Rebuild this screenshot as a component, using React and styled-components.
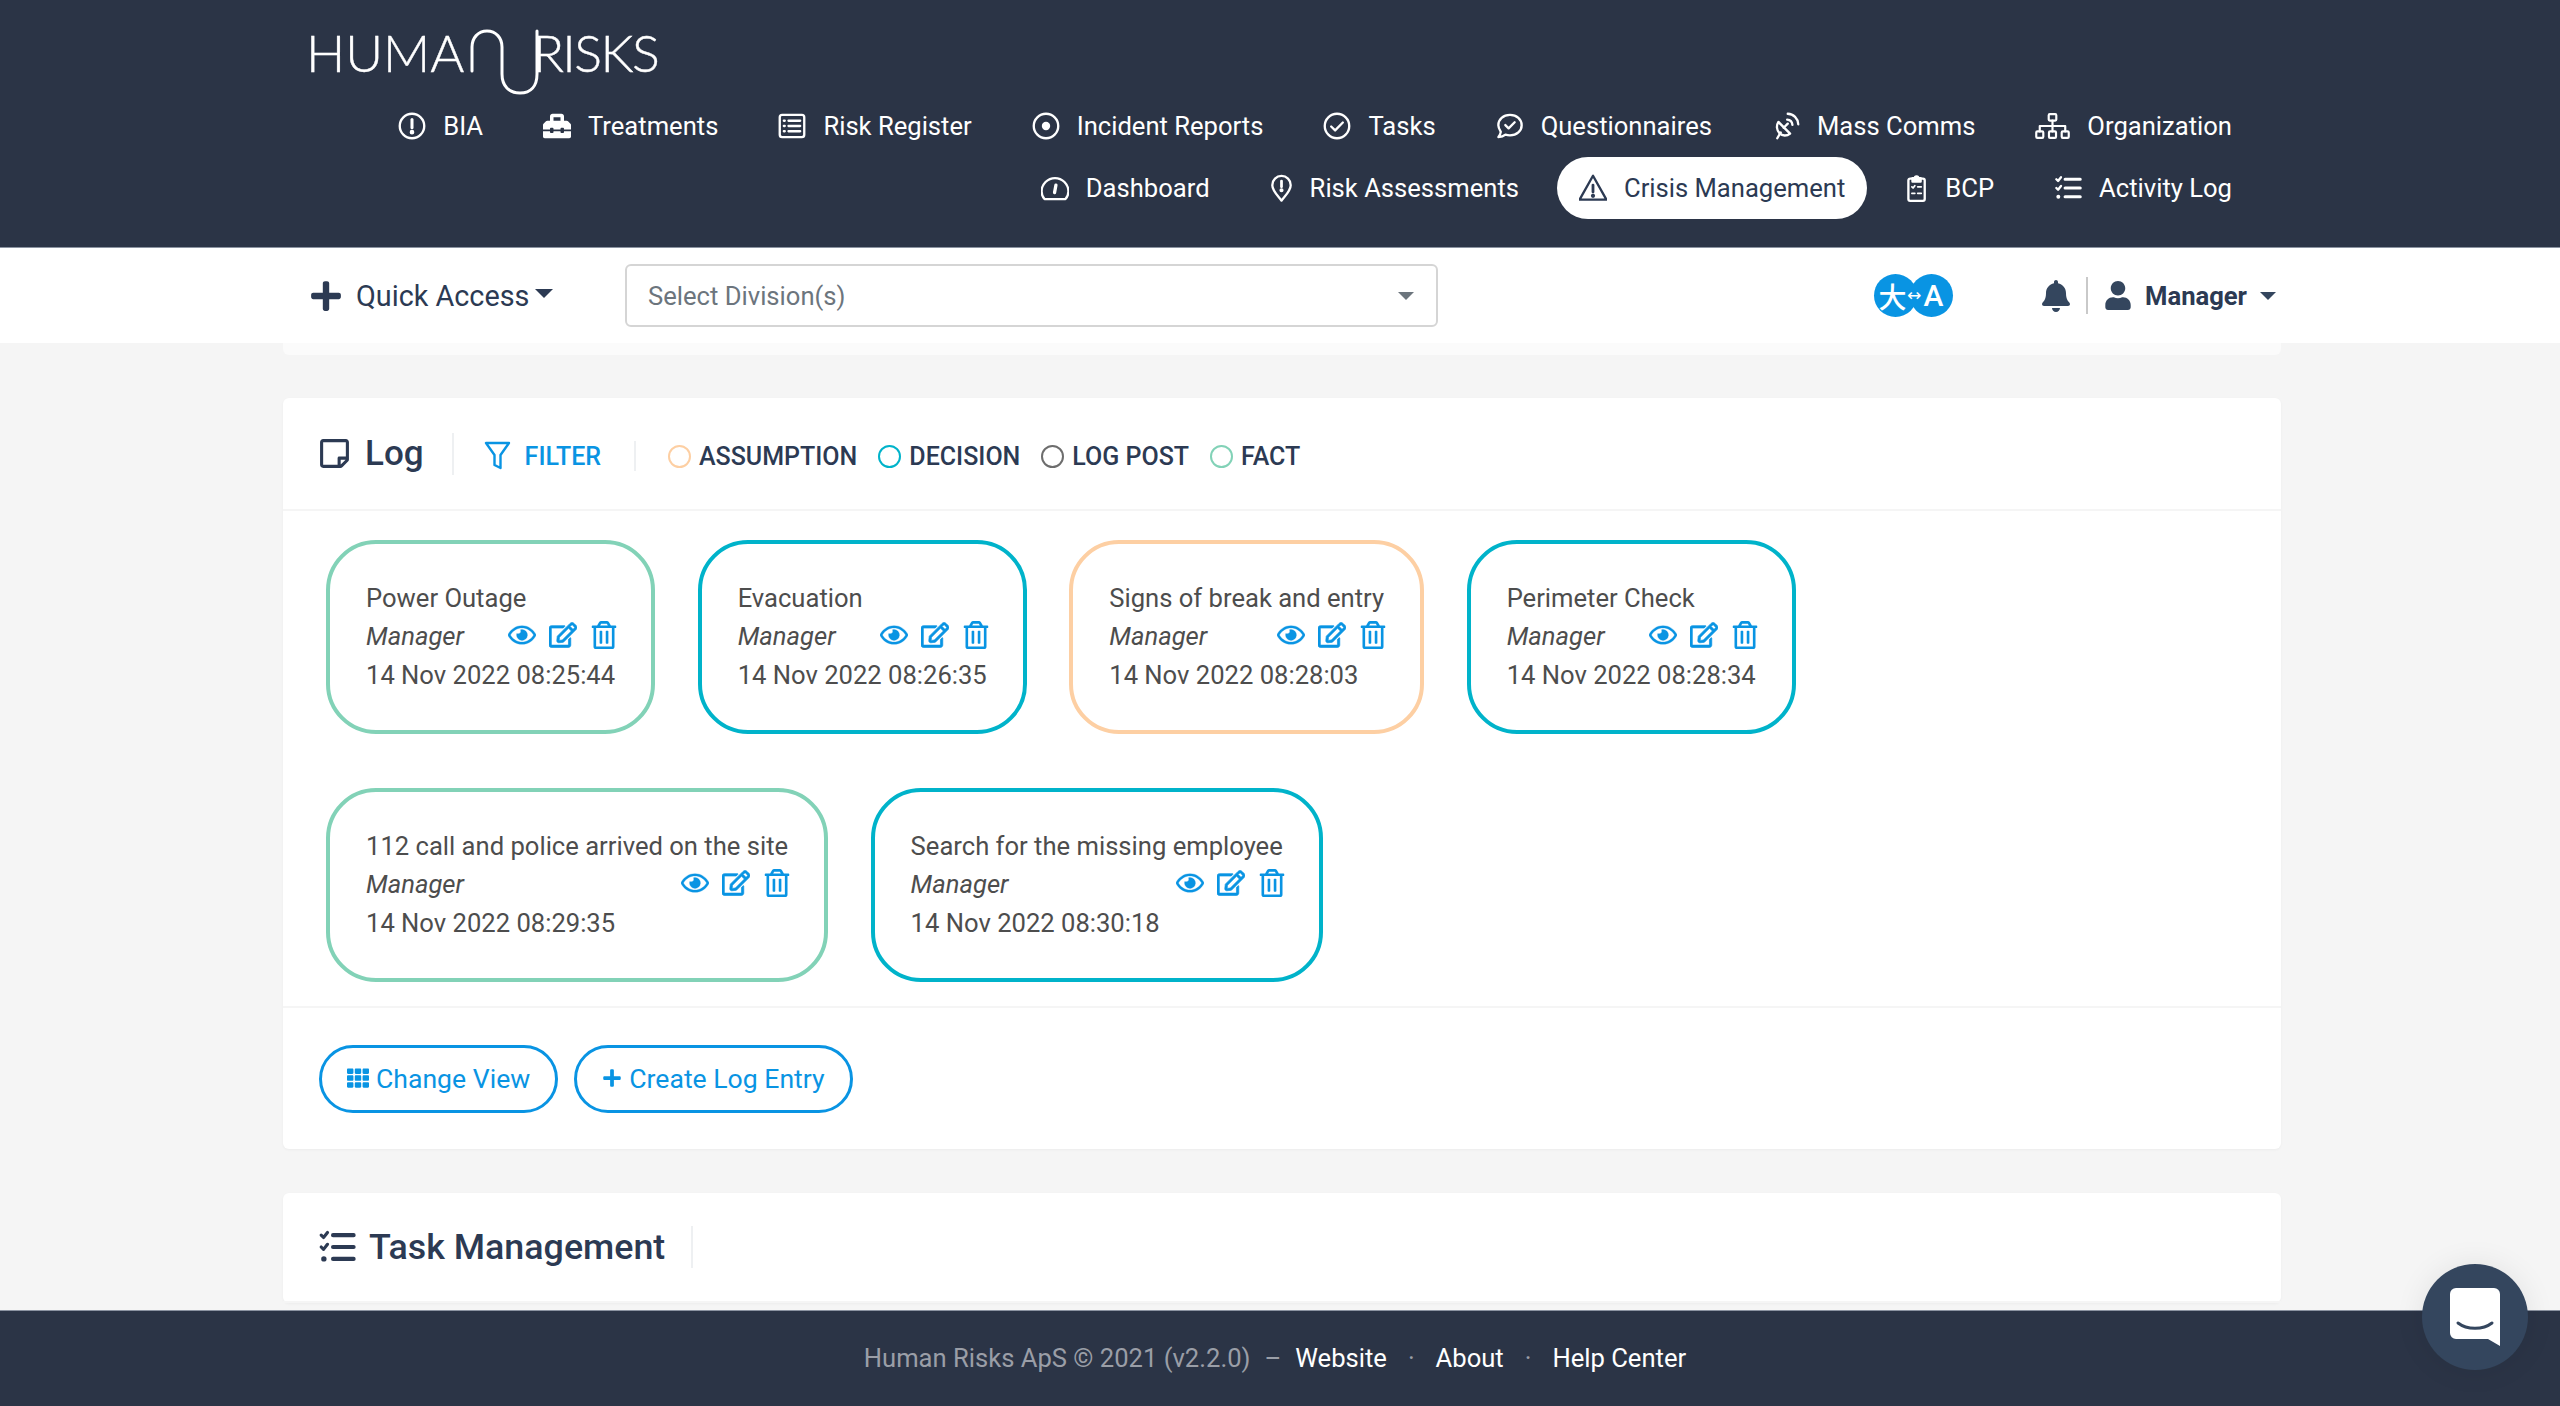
import React from 'react';
import styled, { createGlobalStyle } from 'styled-components';
import { FaToolbox, FaRegEye, FaRegEdit, FaRegTrashAlt, FaRegStickyNote, FaBell, FaUser, FaTh, FaPlus } from 'react-icons/fa';

const GlobalStyle = createGlobalStyle`
  html, body { margin: 0; padding: 0; height: 100%; background: #f5f5f5; }
  body { font-family: Roboto, "Liberation Sans", sans-serif; overflow: hidden; }
  * { box-sizing: border-box; }
`;

const navy = '#2b3446';
const ink = '#2c3a53';
const blue = '#0994e3';
const kinds = { fact: '#82d2b7', decision: '#00b3ca', assumption: '#fdcfa3', post: '#6d6d6d' };

const Page = styled.div`
  height: 100vh;
  display: flex;
  flex-direction: column;
`;

const Header = styled.header`
  background: ${navy};
  height: 248px;
  flex: none;
  padding: 0 306px;
  border-bottom: 1px solid #8b93a1;
`;

const Logo = styled.div`
  height: 95px;
  padding-top: 22px;
  display: flex;
  align-items: flex-start;
  color: #fff;
  font-family: Lato, sans-serif;
  font-weight: 300;
  font-size: 52px;
  line-height: 60px;
  -webkit-text-stroke: 0.4px #fff;
`;

const LogoWord = styled.span`
  display: block;
  letter-spacing: ${p => p.$tight}px;
`;

const LogoWave = styled.svg`
  flex: none;
  width: 76px;
  height: 72px;
  margin: 7px -13px 0 5px;
`;

const NavRow = styled.nav`
  height: 62px;
  display: flex;
  justify-content: flex-end;
  gap: 16px;
`;

const NavItem = styled.a`
  display: flex;
  align-items: center;
  gap: 17px;
  height: 62px;
  padding: 0 22px;
  border-radius: 31px;
  font-size: 25.6px;
  color: ${p => (p.$active ? ink : '#fff')};
  background: ${p => (p.$active ? '#fff' : 'transparent')};
`;

const NavGlyph = styled.svg`
  flex: none;
  width: ${p => p.$w || 28}px;
  height: ${p => p.$h || 28}px;
  fill: none;
  stroke: currentColor;
  stroke-width: 2;
  stroke-linecap: round;
  stroke-linejoin: round;
`;

const Toolbox = styled(FaToolbox)`
  flex: none;
  width: 28px;
  height: 28px;
`;

const Toolbar = styled.div`
  height: 95px;
  flex: none;
  background: #fff;
  position: relative;
  z-index: 2;
  display: flex;
  align-items: center;
  padding: 0 284px 0 309px;
  color: ${ink};
`;

const QuickAccess = styled.div`
  display: flex;
  align-items: center;
  width: 319px;
  font-size: 28.8px;
  gap: 13px;
`;

const PlusMark = styled(FaPlus)`
  width: 34px;
  height: 34px;
`;

const Caret = styled.span`
  display: inline-block;
  width: 0;
  height: 0;
  border-left: ${p => p.$size || 9}px solid transparent;
  border-right: ${p => p.$size || 9}px solid transparent;
  border-top: ${p => p.$size || 9}px solid ${p => p.$color || ink};
`;

const QuickCaret = styled(Caret)`
  margin-left: -7px;
  margin-top: -4px;
`;

const DivisionSelect = styled.div`
  width: 813px;
  height: 63px;
  flex: none;
  border: 2px solid #d5d5d5;
  border-radius: 6px;
  display: flex;
  align-items: center;
  justify-content: space-between;
  padding: 0 22px 0 21px;
  font-size: 25.6px;
  color: #6c757d;
`;

const TranslateBadge = styled.div`
  position: relative;
  margin-left: 436px;
  display: flex;
  flex: none;
`;

const TranslateCircle = styled.span`
  width: 43px;
  height: 43px;
  border-radius: 50%;
  background: ${blue};
  color: #fff;
  display: flex;
  align-items: center;
  justify-content: center;
  font-size: ${p => (p.$second ? 30 : 28)}px;
  font-weight: 500;
  margin-left: ${p => (p.$second ? '-7px' : '0')};
  font-family: ${p => (p.$second ? 'Roboto' : '"Noto Sans CJK JP"')}, sans-serif;
  padding: ${p => (p.$second ? '0 0 0 4px' : '0 6px 0 0')};
`;

const TranslateArrow = styled.span`
  position: absolute;
  left: 31px;
  top: 8px;
  width: 18px;
  text-align: center;
  font-size: 17px;
  line-height: 27px;
  color: #fff;
  font-family: "DejaVu Sans", sans-serif;
`;

const UserMenu = styled.div`
  display: flex;
  align-items: center;
  margin-left: 89px;
  font-size: 25.6px;
  font-weight: 700;
`;

const Bell = styled(FaBell)`
  width: 28px;
  height: 32px;
  color: #34465e;
`;

const MenuDivider = styled.span`
  width: 2px;
  height: 37px;
  background: #c9c9c9;
  margin: 0 17px 0 16px;
`;

const UserIcon = styled(FaUser)`
  width: 26px;
  height: 29px;
  color: #34465e;
  margin-right: 14px;
`;

const UserCaret = styled(Caret)`
  margin-left: 13px;
`;

const Main = styled.main`
  flex: 1;
  min-height: 0;
  overflow: hidden;
  padding: 0 279px 0 283px;
`;

const GhostEdge = styled.div`
  height: 12px;
  background: #fbfbfb;
  border-radius: 0 0 6px 6px;
  margin-bottom: 43px;
`;

const Panel = styled.section`
  background: #fff;
  border-radius: 6px;
  box-shadow: 0 1px 3px rgba(0, 0, 0, 0.04);
  margin-bottom: 44px;
`;

const PanelHead = styled.div`
  height: ${p => p.$height}px;
  display: flex;
  align-items: center;
  padding-left: 35px;
  border-bottom: 2px solid #f5f5f5;
  color: ${ink};
`;

const PanelTitle = styled.h2`
  margin: 0;
  font-weight: 500;
  font-size: ${p => p.$size}px;
  display: flex;
  align-items: center;
  gap: ${p => p.$gap}px;
  padding-right: ${p => p.$pad}px;
  height: 42px;
  border-right: 2px solid #eef0f2;
`;

const NoteIcon = styled(FaRegStickyNote)`
  width: 33px;
  height: 33px;
`;

const FilterButton = styled.div`
  display: flex;
  align-items: center;
  gap: 14px;
  color: ${blue};
  font-size: 25px;
  font-weight: 500;
  margin-top: 5px;
  padding: 0 33px 0 30px;
  height: 30px;
  border-right: 2px solid #eef0f2;
`;

const FilterGlyph = styled.svg`
  width: 27px;
  height: 30px;
  fill: none;
  stroke: currentColor;
  stroke-width: 2.4;
  stroke-linejoin: round;
`;

const Legend = styled.div`
  display: flex;
  align-items: center;
  gap: 21px;
  margin-top: 5px;
  padding-left: 32px;
`;

const LegendItem = styled.span`
  display: flex;
  align-items: center;
  gap: 8px;
  font-size: 25px;
  font-weight: 500;
`;

const Radio = styled.span`
  width: 23px;
  height: 23px;
  border-radius: 50%;
  border: 2.5px solid ${p => kinds[p.$kind]};
`;

const EntryGrid = styled.div`
  display: flex;
  flex-wrap: wrap;
  gap: 54px 42.5px;
  padding: 29px 43px 24px;
  border-bottom: 2px solid #f5f5f5;
`;

const EntryCard = styled.article`
  border: 4px solid ${p => kinds[p.$kind]};
  border-radius: 50px;
  padding: 35px 36px;
  height: 194px;
  font-size: 25.6px;
  line-height: 38.5px;
  color: #4d4d4d;
`;

const MetaRow = styled.div`
  display: flex;
  justify-content: space-between;
  align-items: center;
  gap: 40px;
  margin: -1px 0 1px;
`;

const Role = styled.em`
  font-style: italic;
`;

const EntryActions = styled.span`
  display: flex;
  align-items: center;
  gap: 13px;
  color: ${blue};
  font-size: 28px;
  margin: -2px -3px 0 0;
  svg:nth-child(1) { stroke-width: 6; }
  svg:nth-child(2) { stroke-width: 14; }
`;

const PanelFoot = styled.div`
  display: flex;
  gap: 16px;
  padding: 37px 36px 36px;
`;

const OutlineButton = styled.button`
  height: 68px;
  padding: 0 25px 2px;
  display: flex;
  align-items: center;
  gap: 7px;
  background: #fff;
  border: 3.5px solid ${blue};
  border-radius: 34px;
  color: ${blue};
  font-family: inherit;
  font-size: 26.6px;
`;

const Footer = styled.footer`
  height: 96px;
  flex: none;
  background: ${navy};
  border-top: 1px solid #8b93a1;
  display: flex;
  align-items: center;
  justify-content: center;
  padding: 0 10px 2px 0;
  font-size: 25.6px;
  color: #9a9ea7;
  position: relative;
  z-index: 2;
`;

const FooterLink = styled.a`
  color: #fff;
`;

const FooterSep = styled.span`
  margin: 0 ${p => p.$space}px;
`;

const ChatBubble = styled.div`
  position: fixed;
  right: 32px;
  bottom: 36px;
  width: 106px;
  height: 106px;
  border-radius: 50%;
  background: #34465e;
  z-index: 3;
  display: flex;
  align-items: center;
  justify-content: center;
  box-shadow: 0 0 30px rgba(0, 0, 0, 0.08);
`;

const Glyphs = {
  alert: <><circle cx="12" cy="12" r="10.5" /><path d="M12 6.5v7" strokeWidth="2.6" /><circle cx="12" cy="17.3" r="1" fill="currentColor" /></>,
  register: <><rect x="1.5" y="2.5" width="21" height="19" rx="2" /><path d="M9 7.5h10M9 12h10M9 16.5h10M5 7.5h.8M5 12h.8M5 16.5h.8" /></>,
  dot: <><circle cx="12" cy="12" r="10.5" /><circle cx="12" cy="12" r="3.6" fill="currentColor" stroke="none" /></>,
  check: <><circle cx="12" cy="12" r="10.5" /><path d="M7 12.4l3.4 3.4L17 9" /></>,
  chat: <><path d="M12 2.5c5.8 0 10 3.9 10 8.8s-4.2 8.7-10 8.7c-1.4 0-2.7-.2-3.9-.6-1.6 1.3-3.5 2-6 2.1 1.1-1.4 1.8-2.8 2-4.4C2.900 15 2 13.300 2 11.300 2 6.400 6.200 2.500 12 2.500z" /><path d="M8 11.200l2.800 2.800L16 8.800" /></>,
  dish: <><path d="M5.500 8.500l10 10c-2.800 2.300-6.600 2.200-9-.2-2.700-2.700-2.900-6.800-1-9.800z" /><path d="M4.500 22.500l3-5M10 13.500l3.500-3.500" /><path d="M13 6.500c2.500.2 4.300 2 4.500 4.500M13.500 1.500c5 .3 8.700 4 9 9" /></>,
  org: <><rect x="12.500" y="1" width="7" height="6" rx="1" /><rect x="1" y="17" width="6.500" height="6" rx="1" /><rect x="12.750" y="17" width="6.500" height="6" rx="1" /><rect x="24.500" y="17" width="6.500" height="6" rx="1" /><path d="M16 7v10M4.250 17v-5h23.500v5" /></>,
  gauge: <><path d="M3 21.500C1.500 19.800.5 17.500.5 15 .5 8.700 5.700 3.500 12 3.500S23.500 8.700 23.500 15c0 2.500-1 4.800-2.500 6.500z" /><path d="M12.800 9.500L11.600 16" strokeWidth="2.800" /></>,
  marker: <><path d="M12 23c-1.500-2.700-8-8.200-8-13.500a8 8 0 0 1 16 0C20 14.800 13.500 20.300 12 23z" /><path d="M12 6v5" strokeWidth="2.400" /><circle cx="12" cy="14" r=".8" fill="currentColor" /></>,
  warning: <><path d="M12 1.500L.5 22h23z" /><path d="M12 9.500v6" strokeWidth="2.400" /><circle cx="12" cy="18.700" r=".8" fill="currentColor" /></>,
  clipboard: <><path d="M8.500 4H6.500A1.500 1.500 0 0 0 5 5.500v16A1.500 1.500 0 0 0 6.500 23h11a1.500 1.500 0 0 0 1.500-1.500v-16A1.500 1.500 0 0 0 17.500 4h-2" /><path d="M8.500 3.500h2a1.500 1.500 0 0 1 3 0h2v3h-7z" fill="currentColor" /><path d="M8 11l1 1 1.500-2M13 11h3M8 16.500h2.500M13 16.500h3" strokeWidth="1.500" /></>,
  tasks: <><path d="M9.500 4.500h13M9.500 12h13M9.500 19.500h13" strokeWidth="2.600" /><path d="M2 4.500l1.500 1.500L6 2.800M2 12l1.500 1.500L6 10.300" /><circle cx="3.700" cy="19.500" r="1.700" fill="currentColor" stroke="none" /></>,
};

// glyphs that are narrower or wider than the plain 24 square
const glyphBoxes = {
  org: { view: '0 0 32 24', w: 35, h: 26 },
  marker: { view: '2 0 20 24', w: 23, h: 28 },
  clipboard: { view: '2.100 0 19.700 24', w: 23, h: 28 },
};

const Glyph = ({ name, size }) => {
  const box = glyphBoxes[name] || { view: '0 0 24 24', w: size, h: size };
  return <NavGlyph viewBox={box.view} $w={box.w} $h={box.h}>{Glyphs[name]}</NavGlyph>;
};

const navRows = [
  [
    { label: 'BIA', icon: 'alert' },
    { label: 'Treatments', icon: 'toolbox' },
    { label: 'Risk Register', icon: 'register' },
    { label: 'Incident Reports', icon: 'dot' },
    { label: 'Tasks', icon: 'check' },
    { label: 'Questionnaires', icon: 'chat' },
    { label: 'Mass Comms', icon: 'dish' },
    { label: 'Organization', icon: 'org' },
  ],
  [
    { label: 'Dashboard', icon: 'gauge' },
    { label: 'Risk Assessments', icon: 'marker' },
    { label: 'Crisis Management', icon: 'warning', active: true },
    { label: 'BCP', icon: 'clipboard' },
    { label: 'Activity Log', icon: 'tasks' },
  ],
];

const legend = [
  { label: 'ASSUMPTION', kind: 'assumption' },
  { label: 'DECISION', kind: 'decision' },
  { label: 'LOG POST', kind: 'post' },
  { label: 'FACT', kind: 'fact' },
];

const entries = [
  { title: 'Power Outage', time: '14 Nov 2022 08:25:44', kind: 'fact' },
  { title: 'Evacuation', time: '14 Nov 2022 08:26:35', kind: 'decision' },
  { title: 'Signs of break and entry', time: '14 Nov 2022 08:28:03', kind: 'assumption' },
  { title: 'Perimeter Check', time: '14 Nov 2022 08:28:34', kind: 'decision' },
  { title: '112 call and police arrived on the site', time: '14 Nov 2022 08:29:35', kind: 'fact' },
  { title: 'Search for the missing employee', time: '14 Nov 2022 08:30:18', kind: 'decision' },
];

export default function App() {
  return (
    <Page>
      <GlobalStyle />
      <Header>
        <Logo>
          <LogoWord $tight={0}>HUMA</LogoWord>
          <LogoWave viewBox="0 0 76 72">
            <path
              d="M3 42V18C3 9 9 2 18 2s15 7 15 16v27c0 12 7 19 18 19s17-7 17-19V2"
              fill="none"
              stroke="#fff"
              strokeWidth="3"
              strokeLinecap="round"
            />
          </LogoWave>
          <LogoWord $tight={-1.6}>RISKS</LogoWord>
        </Logo>
        {navRows.map((row, i) => (
          <NavRow key={i}>
            {row.map(item => (
              <NavItem key={item.label} $active={item.active}>
                {item.icon === 'toolbox' ? <Toolbox /> : <Glyph name={item.icon} size={28} />}
                {item.label}
              </NavItem>
            ))}
          </NavRow>
        ))}
      </Header>

      <Toolbar>
        <QuickAccess>
          <PlusMark />
          Quick Access
          <QuickCaret />
        </QuickAccess>
        <DivisionSelect>
          Select Division(s)
          <Caret $size={8} $color="#6c757d" />
        </DivisionSelect>
        <TranslateBadge>
          <TranslateCircle>大</TranslateCircle>
          <TranslateCircle $second>A</TranslateCircle>
          <TranslateArrow>↔</TranslateArrow>
        </TranslateBadge>
        <UserMenu>
          <Bell />
          <MenuDivider />
          <UserIcon />
          Manager
          <UserCaret $size={8} $color="#34465e" />
        </UserMenu>
      </Toolbar>

      <Main>
        <GhostEdge />
        <Panel>
          <PanelHead $height={113}>
            <PanelTitle $size={35} $gap={14} $pad={28}>
              <NoteIcon />
              Log
            </PanelTitle>
            <FilterButton>
              <FilterGlyph viewBox="0 0 27 30">
                <path d="M2 2h23l-8.500 12v13l-6-3V14z" />
              </FilterGlyph>
              FILTER
            </FilterButton>
            <Legend>
              {legend.map(l => (
                <LegendItem key={l.label}>
                  <Radio $kind={l.kind} />
                  {l.label}
                </LegendItem>
              ))}
            </Legend>
          </PanelHead>
          <EntryGrid>
            {entries.map(e => (
              <EntryCard key={e.time} $kind={e.kind}>
                <div>{e.title}</div>
                <MetaRow>
                  <Role>Manager</Role>
                  <EntryActions>
                    <FaRegEye />
                    <FaRegEdit />
                    <FaRegTrashAlt />
                  </EntryActions>
                </MetaRow>
                <div>{e.time}</div>
              </EntryCard>
            ))}
          </EntryGrid>
          <PanelFoot>
            <OutlineButton><FaTh size={22} />Change View</OutlineButton>
            <OutlineButton><FaPlus size={20} />Create Log Entry</OutlineButton>
          </PanelFoot>
        </Panel>
        <Panel>
          <PanelHead $height={110}>
            <PanelTitle $size={35.8} $gap={13} $pad={26}>
              <Glyph name="tasks" size={38} />
              Task Management
            </PanelTitle>
          </PanelHead>
        </Panel>
      </Main>

      <Footer>
        Human Risks ApS © 2021 (v2.2.0)
        <FooterSep $space={14}>–</FooterSep>
        <FooterLink>Website</FooterLink>
        <FooterSep $space={21}>·</FooterSep>
        <FooterLink>About</FooterLink>
        <FooterSep $space={21}>·</FooterSep>
        <FooterLink>Help Center</FooterLink>
      </Footer>

      <ChatBubble>
        <svg width="50" height="58" viewBox="0 0 50 58">
          <path d="M6 0h38a6 6 0 0 1 6 6v52l-12-7H6a6 6 0 0 1-6-6V6a6 6 0 0 1 6-6z" fill="#fff" />
          <path d="M8 35c9 7 25 7 34 0" fill="none" stroke="#34465e" strokeWidth="3" strokeLinecap="round" />
        </svg>
      </ChatBubble>
    </Page>
  );
}
